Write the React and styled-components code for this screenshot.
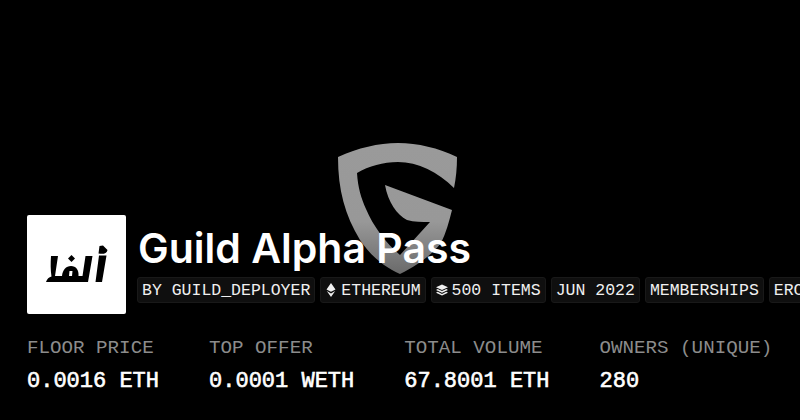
import React from 'react'
import styled, { createGlobalStyle } from 'styled-components'

const GlobalStyle = createGlobalStyle`
  html, body {
    margin: 0;
    padding: 0;
    background: #000;
  }
`

const Page = styled.div`
  position: relative;
  width: 800px;
  height: 420px;
  overflow: hidden;
  background: #000;
  color: #fff;
  box-sizing: border-box;
  padding: 215px 0 0 27px;
`

const Watermark = styled.svg`
  position: absolute;
  left: 330px;
  top: 135px;
  width: 136px;
  height: 146px;
  filter: blur(0.6px);
`

const Header = styled.div`
  position: relative;
  display: flex;
  gap: 11px;
  height: 99px;
`

const LogoBox = styled.div`
  flex: none;
  width: 99px;
  height: 99px;
  background: #fff;
  border-radius: 2px;
`

const LogoArt = styled.svg`
  display: block;
  width: 99px;
  height: 99px;
`

const HeaderText = styled.div`
  flex: 1;
  min-width: 0;
  overflow: hidden;
`

const Title = styled.h1`
  margin: 7px 0 0 1px;
  height: 55px;
  font-family: Inter, sans-serif;
  font-weight: 600;
  font-size: 41px;
  line-height: 52px;
  white-space: nowrap;
`

const Tags = styled.div`
  display: flex;
  gap: 5px;
`

const Tag = styled.div`
  flex: none;
  box-sizing: border-box;
  display: flex;
  align-items: center;
  gap: 4px;
  height: 26px;
  padding: 0 4px;
  background: #0f0f0f;
  border: 1px solid #191919;
  border-radius: 3px;
  font-family: "Liberation Mono", monospace;
  font-size: 16.5px;
  color: #f0f0f0;
  white-space: nowrap;
`

const Stats = styled.div`
  position: relative;
  display: flex;
  gap: 50px;
  margin-top: 22px;
`

const Stat = styled.div`
  display: flex;
  flex-direction: column;
  gap: 9px;
`

const StatLabel = styled.div`
  font-family: "Liberation Mono", monospace;
  font-size: 19.2px;
  line-height: 24px;
  color: #8c8c8c;
  white-space: nowrap;
`

const StatValue = styled.div`
  font-family: "Liberation Mono", monospace;
  font-size: 22px;
  line-height: 26px;
  color: #fff;
  -webkit-text-stroke: 0.6px #fff;
  white-space: nowrap;
`

const Shield = () => (
  <Watermark viewBox="330 135 136 146">
    <defs>
      <linearGradient id="shieldFill" x1="0" y1="0" x2="0" y2="1">
        <stop offset="0" stopColor="#9a9a9a" />
        <stop offset="0.6" stopColor="#989898" />
        <stop offset="1" stopColor="#6a6a6a" />
      </linearGradient>
    </defs>
    <path
      fill="url(#shieldFill)"
      d="M338 157 C358 148 378 143 398 143 C418 143 438 148 457 157 C457 168 456 178 454 188 C438 172 418 162 398 162 C383 162 369 166 357 173 C358 188 361 198 366 209 C373 226 386 243 400 255 L430 222 C422 222 414 222 407 220 C397 215 388 202 385 185 L452 210 C449 222 446 233 441 243 C431 256 416 266 400 274 C384 267 370 255 360 240 C345 215 338 190 338 157 Z"
    />
  </Watermark>
)

// coordinates are page pixels, the box sits at 27,215
const Logo = () => (
  <LogoArt viewBox="27 215 99 99">
    <path
      fill="#000"
      d="M51 256 L58 256 L55 276 L82.500 276 L85.500 256 L92.500 256 L88 282 L46 282 C47 279 49 277 51.500 276.500 C50.500 270 50.500 263 51 256 Z"
    />
    <path
      fill="#000"
      d="M62 276 C62.500 270 66 266 71 266 C76 266 79 270 78.500 276 Z"
    />
    <path fill="#fff" d="M69.500 271 L72.500 271 L72 276 L69 276 Z" />
    <path fill="#000" d="M71.500 255 L75 258.500 L71.500 262 L68 258.500 Z" />
    <path
      fill="#000"
      d="M99 255.500 L106.500 255.500 L102 282 L95.500 282 Z M99.500 246 L103 245.500 L107.500 250 C107 253.500 103 254.500 98.500 253.500 Z"
    />
  </LogoArt>
)

const EthIcon = () => (
  <svg width="12" height="14" viewBox="0 0 12 14">
    <path fill="#f0f0f0" d="M6 0 L10.500 6.400 L6 8.800 L1.500 6.400 Z M1.800 8 L6 10.400 L10.200 8 L6 14 Z" />
  </svg>
)

const StackIcon = () => (
  <svg width="12" height="12" viewBox="0 0 13 12">
    <path fill="#f0f0f0" d="M6.500 0 L13 3 L6.500 6 L0 3 Z" />
    <path fill="#f0f0f0" d="M1.800 5 L6.500 7.200 L11.200 5 L13 6 L6.500 9 L0 6 Z" />
    <path fill="#f0f0f0" d="M1.800 8 L6.500 10.200 L11.200 8 L13 9 L6.500 12 L0 9 Z" />
  </svg>
)

const stats = [
  { label: 'FLOOR PRICE', value: '0.0016 ETH' },
  { label: 'TOP OFFER', value: '0.0001 WETH' },
  { label: 'TOTAL VOLUME', value: '67.8001 ETH' },
  { label: 'OWNERS (UNIQUE)', value: '280' },
]

const App = () => (
  <Page>
    <GlobalStyle />
    <Shield />
    <Header>
      <LogoBox>
        <Logo />
      </LogoBox>
      <HeaderText>
        <Title>Guild Alpha Pass</Title>
        <Tags>
          <Tag>BY GUILD_DEPLOYER</Tag>
          <Tag>
            <EthIcon />
            ETHEREUM
          </Tag>
          <Tag>
            <StackIcon />
            500 ITEMS
          </Tag>
          <Tag>JUN 2022</Tag>
          <Tag>MEMBERSHIPS</Tag>
          <Tag>ERC721</Tag>
        </Tags>
      </HeaderText>
    </Header>
    <Stats>
      {stats.map(s => (
        <Stat key={s.label}>
          <StatLabel>{s.label}</StatLabel>
          <StatValue>{s.value}</StatValue>
        </Stat>
      ))}
    </Stats>
  </Page>
)

export default App
